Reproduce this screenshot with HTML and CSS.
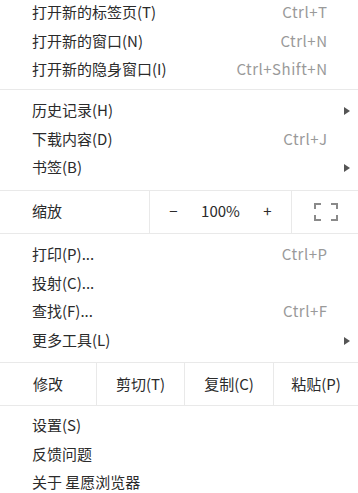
FILE: index.html
```html
<!DOCTYPE html>
<html lang="zh-CN">
<head>
<meta charset="utf-8">
<title>菜单</title>
<link rel="stylesheet" href="styles.css">
</head>
<body>
<div class="menu">
  <div class="group first">
    <div class="item"><span class="label">打开新的标签页(T)</span><span class="key">Ctrl+T</span></div>
    <div class="item"><span class="label">打开新的窗口(N)</span><span class="key">Ctrl+N</span></div>
    <div class="item"><span class="label">打开新的隐身窗口(I)</span><span class="key">Ctrl+Shift+N</span></div>
  </div>
  <div class="group">
    <div class="item sub"><span class="label">历史记录(H)</span><span class="arrow"></span></div>
    <div class="item"><span class="label">下载内容(D)</span><span class="key">Ctrl+J</span></div>
    <div class="item sub"><span class="label">书签(B)</span><span class="arrow"></span></div>
  </div>
  <div class="zoom-row">
    <div class="zoom-label">缩放</div>
    <div class="zoom-ctrl">
      <span class="zbtn">−</span>
      <span class="zval">100%</span>
      <span class="zbtn">+</span>
    </div>
    <div class="zoom-full">
      <svg width="24" height="18" viewBox="0 0 24 18" aria-hidden="true">
        <path d="M1 6V1H7M17 1H23V6M23 12V17H17M7 17H1V12" fill="none" stroke="#8a8a8a" stroke-width="2"/>
      </svg>
    </div>
  </div>
  <div class="group">
    <div class="item"><span class="label">打印(P)...</span><span class="key">Ctrl+P</span></div>
    <div class="item"><span class="label">投射(C)...</span></div>
    <div class="item"><span class="label">查找(F)...</span><span class="key">Ctrl+F</span></div>
    <div class="item sub"><span class="label">更多工具(L)</span><span class="arrow"></span></div>
  </div>
  <div class="edit-row">
    <div class="ecell">修改</div>
    <div class="ecell">剪切(T)</div>
    <div class="ecell">复制(C)</div>
    <div class="ecell">粘贴(P)</div>
  </div>
  <div class="group last">
    <div class="item"><span class="label">设置(S)</span></div>
    <div class="item"><span class="label">反馈问题</span></div>
    <div class="item"><span class="label">关于 星愿浏览器</span></div>
  </div>
</div>
</body>
</html>
```
FILE: styles.css
```css
html, body {
  margin: 0;
  padding: 0;
  background: #ffffff;
}
body {
  font-family: "Noto Sans CJK SC", "Noto Sans", sans-serif;
  font-size: 15px;
  color: #2b2b2b;
  overflow: hidden;
}
.menu {
  width: 358px;
  margin-top: -1.3px;
}
.group {
  padding: 7px 0;
  border-top: 1px solid #e9e9e9;
}
.group.first {
  padding: 0 0 4.5px;
  border-top: none;
}
.group.last {
  padding-top: 6px;
}
.item {
  display: flex;
  align-items: center;
  box-sizing: border-box;
  height: 28.6px;
  padding: 0 31px 3px 32px;
  white-space: nowrap;
}
.group.last .item {
  height: 28.3px;
}
.item.sub {
  padding-right: 8px;
}
.key {
  margin-left: auto;
  color: #9a9a9a;
  letter-spacing: 0.5px;
  margin-right: -0.5px;
}
.arrow {
  margin-left: auto;
  margin-top: 3px;
  width: 0;
  height: 0;
  border-left: 6px solid #555555;
  border-top: 4.5px solid transparent;
  border-bottom: 4.5px solid transparent;
}
.zoom-row {
  display: grid;
  grid-template-columns: 149px 143px 1fr;
  height: 42px;
  border-top: 1px solid #e9e9e9;
}
.zoom-label {
  display: flex;
  align-items: center;
  padding: 0 0 2px 32px;
}
.zoom-ctrl {
  display: grid;
  grid-template-columns: 1fr 1fr 1fr;
  align-items: center;
  padding-bottom: 2px;
  border-left: 1px solid #e9e9e9;
  border-right: 1px solid #e9e9e9;
}
.zbtn, .zval {
  text-align: center;
}
.zoom-full {
  display: flex;
  align-items: center;
  justify-content: center;
  padding-left: 2px;
}
.edit-row {
  display: grid;
  grid-template-columns: 96px 88px 89px 1fr;
  height: 42px;
  border-top: 1px solid #e9e9e9;
}
.ecell {
  display: flex;
  align-items: center;
  justify-content: center;
  padding-bottom: 2px;
  border-left: 1px solid #e9e9e9;
}
.ecell:first-child {
  border-left: none;
}
```
